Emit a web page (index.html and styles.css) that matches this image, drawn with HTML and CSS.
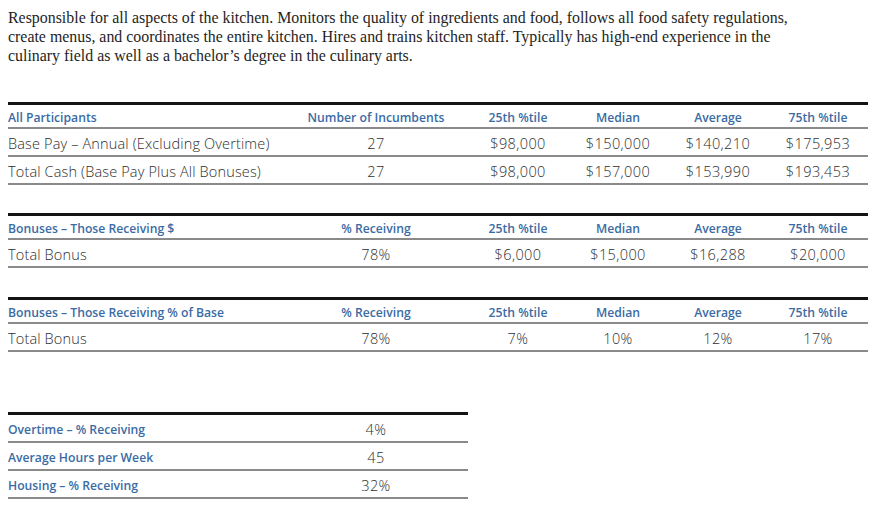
FILE: index.html
```html
<!DOCTYPE html>
<html>
<head>
<meta charset="utf-8">
<link rel="stylesheet" href="styles.css">
</head>
<body>
<p class="intro">Responsible for all aspects of the kitchen. Monitors the quality of ingredients and food, follows all food safety regulations, create menus, and coordinates the entire kitchen. Hires and trains kitchen staff. Typically has high-end experience in the culinary field as well as a bachelor’s degree in the culinary arts.</p>

<table class="stats first">
  <colgroup><col class="c-label"><col class="c-count"><col class="c-num"><col class="c-num"><col class="c-num"><col class="c-num"></colgroup>
  <thead>
    <tr><th class="lbl">All Participants</th><th>Number of Incumbents</th><th>25th %tile</th><th>Median</th><th>Average</th><th>75th %tile</th></tr>
  </thead>
  <tbody>
    <tr><td class="lbl">Base Pay – Annual (Excluding Overtime)</td><td>27</td><td>$98,000</td><td>$150,000</td><td>$140,210</td><td>$175,953</td></tr>
    <tr><td class="lbl">Total Cash (Base Pay Plus All Bonuses)</td><td>27</td><td>$98,000</td><td>$157,000</td><td>$153,990</td><td>$193,453</td></tr>
  </tbody>
</table>

<table class="stats second">
  <colgroup><col class="c-label"><col class="c-count"><col class="c-num"><col class="c-num"><col class="c-num"><col class="c-num"></colgroup>
  <thead>
    <tr><th class="lbl">Bonuses – Those Receiving $</th><th>% Receiving</th><th>25th %tile</th><th>Median</th><th>Average</th><th>75th %tile</th></tr>
  </thead>
  <tbody>
    <tr><td class="lbl">Total Bonus</td><td>78%</td><td>$6,000</td><td>$15,000</td><td>$16,288</td><td>$20,000</td></tr>
  </tbody>
</table>

<table class="stats third">
  <colgroup><col class="c-label"><col class="c-count"><col class="c-num"><col class="c-num"><col class="c-num"><col class="c-num"></colgroup>
  <thead>
    <tr><th class="lbl">Bonuses – Those Receiving % of Base</th><th>% Receiving</th><th>25th %tile</th><th>Median</th><th>Average</th><th>75th %tile</th></tr>
  </thead>
  <tbody>
    <tr><td class="lbl">Total Bonus</td><td>78%</td><td>7%</td><td>10%</td><td>12%</td><td>17%</td></tr>
  </tbody>
</table>

<table class="stats extra">
  <colgroup><col class="c-label"><col class="c-count"></colgroup>
  <tbody>
    <tr><th class="lbl">Overtime – % Receiving</th><td>4%</td></tr>
    <tr><th class="lbl">Average Hours per Week</th><td>45</td></tr>
    <tr><th class="lbl">Housing – % Receiving</th><td>32%</td></tr>
  </tbody>
</table>
</body>
</html>
```

FILE: styles.css
```css
body {
  margin: 8px;
  background: #ffffff;
}

.intro {
  margin: 0;
  width: 800px;
  font-family: "Liberation Serif", serif;
  font-size: 15.9px;
  line-height: 19px;
  color: #1e1e1e;
}

.stats {
  border-collapse: collapse;
  table-layout: fixed;
  width: 860px;
  font-family: "Open Sans", sans-serif;
}

.stats.first { margin-top: 37px; }
.stats.second { margin-top: 28px; }
.stats.third { margin-top: 29px; }
.stats.extra { margin-top: 60px; width: 460px; }

.c-label { width: 276px; }
.c-count { width: 184px; }
.c-num { width: 100px; }

.stats th,
.stats td {
  padding: 0;
  text-align: center;
  border-bottom: 2px solid #8a8a8a;
}

.stats thead th {
  height: 20px;
  padding-top: 2px;
  border-top: 3px solid #141414;
  font-size: 12.2px;
  font-weight: 600;
  color: #3a6ba4;
}

.stats td {
  height: 23px;
  padding-top: 3px;
  font-size: 14.5px;
  font-weight: 300;
  letter-spacing: 0.4px;
  color: #2e2e2e;
}

.stats td.lbl {
  letter-spacing: 0.15px;
}

.stats .lbl {
  text-align: left;
}

.stats tbody th {
  height: 24px;
  padding-top: 2px;
  font-size: 12.2px;
  font-weight: 600;
  color: #3a6ba4;
}

.stats.extra tr:first-child th,
.stats.extra tr:first-child td {
  border-top: 3px solid #141414;
}
```
